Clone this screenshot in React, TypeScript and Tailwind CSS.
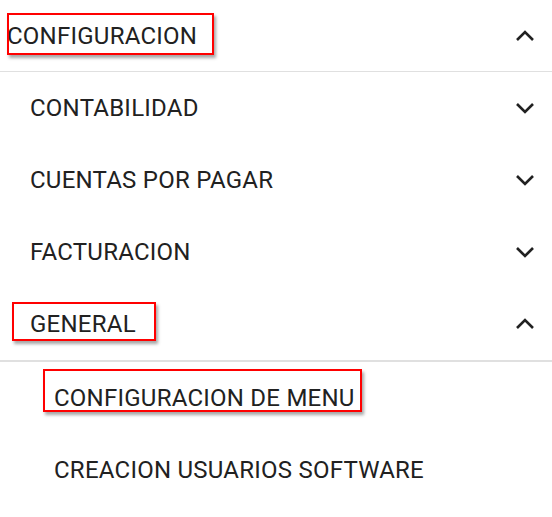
import React from 'react';

const Chevron = ({ up }: { up?: boolean }) => (
  <svg width="20" height="12" viewBox="0 0 20 12" className="shrink-0">
    <polyline
      points={up ? '2,10 10,2 18,10' : '2,2 10,10 18,2'}
      fill="none"
      stroke="#212121"
      strokeWidth="2.6"
    />
  </svg>
);

const Mark = ({ className }: { className: string }) => (
  <div className={`pointer-events-none absolute border-2 border-[#ff0000] shadow-[2px_3px_3px_rgba(0,0,0,0.35)] ${className}`} />
);

interface RowProps {
  label: string;
  indent: string;
  chevron?: 'up' | 'down';
  mark?: string;
}

const Row: React.FC<RowProps> = ({ label, indent, chevron, mark }) => (
  <div className={`relative flex h-[72px] items-center justify-between pr-[17px] ${indent}`}>
    <span className="text-[24px] leading-none tracking-[0.01em] text-[#212121]">{label}</span>
    {chevron && <Chevron up={chevron === 'up'} />}
    {mark && <Mark className={mark} />}
  </div>
);

export default function App() {
  return (
    <div className="h-[517px] w-[552px] overflow-hidden bg-white font-['Roboto',sans-serif]">
      <Row label="CONFIGURACION" indent="pl-[7px]" chevron="up" mark="left-[7px] top-[13px] h-[42px] w-[207px]" />
      <div className="-mt-px h-px bg-[#e0e0e0]" />
      <Row label="CONTABILIDAD" indent="pl-[30px]" chevron="down" />
      <Row label="CUENTAS POR PAGAR" indent="pl-[30px]" chevron="down" />
      <Row label="FACTURACION" indent="pl-[30px]" chevron="down" />
      <Row label="GENERAL" indent="pl-[30px]" chevron="up" mark="left-[12px] top-[14px] h-[39px] w-[144px]" />
      <div className="h-[2px] bg-[#e0e0e0]" />
      <Row label="CONFIGURACION DE MENU" indent="pl-[54px]" mark="left-[43px] top-[7px] h-[43px] w-[319px]" />
      <Row label="CREACION USUARIOS SOFTWARE" indent="pl-[54px]" />
    </div>
  );
}
